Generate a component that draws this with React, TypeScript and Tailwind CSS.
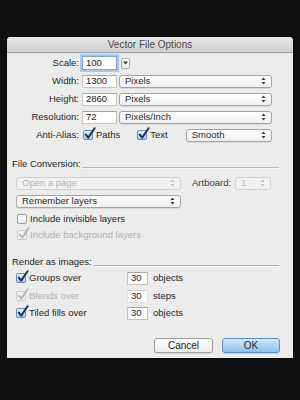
import React from "react";

const FONT = { fontFamily: '"Liberation Sans", Arial, sans-serif' };

function Arrows({ color = "#333" }: { color?: string }) {
  return (
    <svg width="5" height="8" viewBox="0 0 5 8" className="shrink-0">
      <path d="M0.5 3 L2.5 0.5 L4.5 3 Z" fill={color} />
      <path d="M0.5 5 L2.5 7.5 L4.5 5 Z" fill={color} />
    </svg>
  );
}

function Select({
  label,
  className,
  disabled,
}: {
  label: string;
  className: string;
  disabled?: boolean;
}) {
  return (
    <div
      className={`flex items-center justify-between h-[13px] pl-[5px] pr-[5px] rounded-[3px] border ${
        disabled
          ? "border-[#d0d0d0] bg-[#f1f1f1] text-[#b4b4b4]"
          : "border-[#a4a4a4] bg-gradient-to-b from-[#ffffff] to-[#f0f0f0] text-[#2a2a2a] shadow-[0_1px_0_rgba(0,0,0,0.08)]"
      } ${className}`}
    >
      <span className="leading-none">{label}</span>
      <Arrows color={disabled ? "#c0c0c0" : "#3a3a3a"} />
    </div>
  );
}

function Input({ value, className, focused, dim }: { value: string; className: string; focused?: boolean; dim?: boolean }) {
  return (
    <div
      className={`flex items-center h-[13px] pl-[3px] bg-white border ${
        focused
          ? "border-[#7fa6d4] shadow-[0_0_0_2px_#a8c8ec]"
          : dim
          ? "border-[#e2e2e2] border-t-[#cfcfcf]"
          : "border-[#c4c4c4] border-t-[#a6a6a6]"
      } text-[#222] ${className}`}
    >
      <span className="leading-none">{value}</span>
    </div>
  );
}

function Check({ checked, disabled }: { checked?: boolean; disabled?: boolean }) {
  return (
    <span
      className={`relative inline-block shrink-0 w-[10px] h-[10px] rounded-[2px] border ${
        disabled
          ? "border-[#cdcdcd] bg-[#f3f3f3]"
          : checked
          ? "border-[#6d8fb8] bg-gradient-to-b from-[#e4f0fb] to-[#a9cdef]"
          : "border-[#9c9c9c] bg-gradient-to-b from-[#ffffff] to-[#ececec]"
      }`}
    >
      {checked && (
        <svg
          width="12"
          height="13"
          viewBox="0 0 12 13"
          className="absolute left-[0px] top-[-4px]"
        >
          <path
            d="M1.8 7.6 L4.2 10.6 L10.6 1.2"
            stroke={disabled ? "#b8b8b8" : "#1d3557"}
            strokeWidth="2"
            fill="none"
            strokeLinecap="round"
            strokeLinejoin="round"
          />
        </svg>
      )}
    </span>
  );
}

function Label({ children }: { children: React.ReactNode }) {
  return <div className="w-[72px] text-right pr-[0px] text-[#262626]">{children}</div>;
}

function SectionHeader({ title, className }: { title: string; className: string }) {
  return (
    <div className={`flex items-end h-[14px] pl-[5px] pr-[14px] ${className}`}>
      <span className="text-[#262626] leading-none mb-[2px]">{title}</span>
      <div className="flex-1 h-px bg-[#b4b4b4] mb-[2px] ml-[1px] shadow-[0_1px_0_#fafafa]" />
    </div>
  );
}

export default function App() {
  return (
    <div className="w-[300px] h-[400px] bg-[#101010] pt-[37px] pl-[7px]" style={FONT}>
      <div className="w-[286px] h-[321px] bg-[#ececec] rounded-t-[4px] flex flex-col text-[9.5px] shadow-[0_0_3px_rgba(0,0,0,0.6)]">
        {/* Title bar */}
        <div className="h-[16px] rounded-t-[4px] bg-gradient-to-b from-[#e8e8e8] to-[#cfcfcf] border-b border-[#9e9e9e] flex items-center justify-center">
          <span className="text-[10px] text-[#4a4a4a] leading-none">Vector File Options</span>
        </div>

        {/* Scale */}
        <div className="flex items-center h-[18px] mt-[1px]">
          <Label>Scale:</Label>
          <Input value="100" focused className="w-[35px] ml-[3px] h-[14px]" />
          <div className="ml-[4px] w-[9px] h-[11px] border border-[#a8a8a8] rounded-[2px] bg-gradient-to-b from-white to-[#eeeeee] flex items-center justify-center">
            <svg width="5" height="4" viewBox="0 0 5 4">
              <path d="M0 0.5 L5 0.5 L2.5 3.5 Z" fill="#333" />
            </svg>
          </div>
        </div>

        {/* Width */}
        <div className="flex items-center h-[18px]">
          <Label>Width:</Label>
          <Input value="1300" className="w-[35px] ml-[3px]" />
          <Select label="Pixels" className="w-[153px] ml-[2px]" />
        </div>

        {/* Height */}
        <div className="flex items-center h-[18px]">
          <Label>Height:</Label>
          <Input value="2860" className="w-[35px] ml-[3px]" />
          <Select label="Pixels" className="w-[153px] ml-[2px]" />
        </div>

        {/* Resolution */}
        <div className="flex items-center h-[18px]">
          <Label>Resolution:</Label>
          <Input value="72" className="w-[35px] ml-[3px]" />
          <Select label="Pixels/Inch" className="w-[153px] ml-[2px]" />
        </div>

        {/* Anti-Alias */}
        <div className="flex items-center h-[18px]">
          <Label>Anti-Alias:</Label>
          <div className="ml-[4px] flex items-center">
            <Check checked />
            <span className="ml-[3px] text-[#262626]">Paths</span>
          </div>
          <div className="ml-[17px] flex items-center">
            <Check checked />
            <span className="ml-[3px] text-[#262626]">Text</span>
          </div>
          <Select label="Smooth" className="w-[86px] ml-[18px]" />
        </div>

        {/* File Conversion */}
        <SectionHeader title="File Conversion:" className="mt-[12px]" />

        <div className="flex items-center h-[14px] mt-[6px] pl-[9px]">
          <Select label="Open a page" disabled className="w-[165px]" />
          <span className="ml-[11px] text-[#3a3a3a]">Artboard:</span>
          <Select label="1" disabled className="w-[36px] ml-[4px]" />
        </div>

        <div className="flex items-center h-[14px] mt-[4px] pl-[9px]">
          <Select label="Remember layers" className="w-[165px]" />
        </div>

        <div className="flex items-center h-[14px] mt-[4px] pl-[10px]">
          <Check />
          <span className="ml-[3px] text-[#262626]">Include invisible layers</span>
        </div>

        <div className="flex items-center h-[14px] mt-[2px] pl-[10px]">
          <Check checked disabled />
          <span className="ml-[3px] text-[#b0b0b0]">Include background layers</span>
        </div>

        {/* Render as images */}
        <SectionHeader title="Render as images:" className="mt-[12px]" />

        <div className="flex items-center h-[14px] mt-[3px] pl-[9px]">
          <Check checked />
          <span className="ml-[3px] w-[98px] text-[#262626]">Groups over</span>
          <Input value="30" className="w-[21px]" />
          <span className="ml-[5px] text-[#262626]">objects</span>
        </div>

        <div className="flex items-center h-[14px] mt-[4px] pl-[9px]">
          <Check checked disabled />
          <span className="ml-[3px] w-[98px] text-[#b0b0b0]">Blends over</span>
          <Input value="30" dim className="w-[21px]" />
          <span className="ml-[5px] text-[#262626]">steps</span>
        </div>

        <div className="flex items-center h-[14px] mt-[3px] pl-[9px]">
          <Check checked />
          <span className="ml-[3px] w-[98px] text-[#262626]">Tiled fills over</span>
          <Input value="30" className="w-[21px]" />
          <span className="ml-[5px] text-[#262626]">objects</span>
        </div>

        {/* Buttons */}
        <div className="flex justify-end items-center mt-[18px] pr-[13px] gap-[9px]">
          <div className="w-[59px] h-[15px] rounded-[3px] border border-[#9d9d9d] bg-gradient-to-b from-[#ffffff] to-[#ececec] flex items-center justify-center text-[10px] text-[#222] shadow-[0_1px_0_rgba(0,0,0,0.1)]">
            Cancel
          </div>
          <div className="w-[58px] h-[15px] rounded-[3px] border border-[#5f8fc2] bg-gradient-to-b from-[#d5e9fb] to-[#8cc0ef] flex items-center justify-center text-[10px] text-[#1c2a3a] shadow-[0_1px_0_rgba(0,0,0,0.1)]">
            OK
          </div>
        </div>
      </div>
    </div>
  );
}
